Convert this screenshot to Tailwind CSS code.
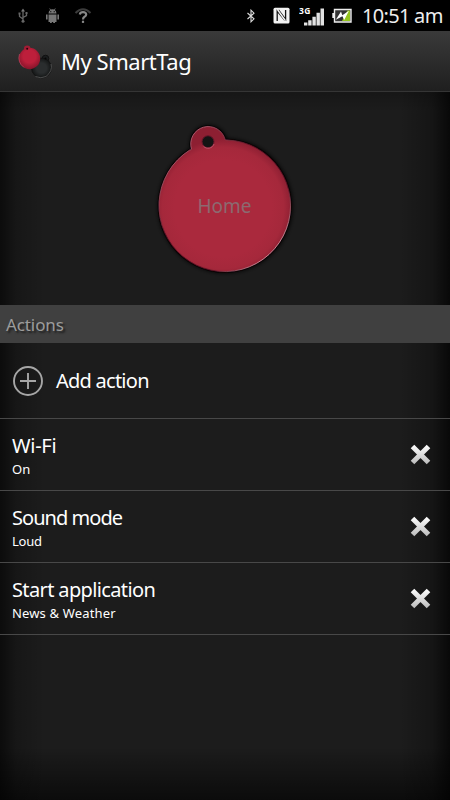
<!DOCTYPE html>
<html lang="en">
<head>
  <meta charset="UTF-8" />
  <title>My SmartTag</title>
  <meta name="viewport" content="width=device-width, initial-scale=1.0" />
  <script src="https://cdn.jsdelivr.net/npm/@tailwindcss/browser@4"></script>
</head>

<body class="flex flex-col w-[450px] h-[800px] overflow-hidden bg-black font-['Noto_Sans',sans-serif] text-white">

  <!-- Status bar -->
  <div class="flex items-center h-[31px] shrink-0 bg-black">
    <svg class="ml-[17px] w-[12px] h-[16px]" viewBox="0 0 12 16" fill="none" stroke="#666" stroke-width="1.3">
      <path d="M6 2v11M6 11L2.5 8.500V6M6 9.500l3.500-2V5" />
      <path d="M6 .5L8 3.500H4z" fill="#777" stroke="none" />
      <circle cx="6" cy="13.300" r="1.500" fill="#666" stroke="none" />
      <path d="M1.500 4.500h2v2h-2zM8.500 4h2v2h-2z" fill="#666" stroke="none" />
    </svg>
    <svg class="ml-[17px] w-[13px] h-[16px]" viewBox="0 0 13 16" fill="#777">
      <path d="M2.500 5.500Q2.700 2.800 4.200 2L3.300.6l.5-.4 1 1.400Q6.500 1 8.200 1.600l1-1.400.5.4L8.800 2Q10.300 2.800 10.500 5.500z" />
      <path d="M2.500 6.500h8V14h-8zM0 6.500h1.600v5H0zM11.400 6.500H13v5h-1.600z" />
      <path d="M4 13h1.800v2H4zM7.200 13H9v2H7.200z" />
      <circle cx="4.800" cy="3.700" r=".6" fill="#000" /><circle cx="8.200" cy="3.700" r=".6" fill="#000" />
    </svg>
    <svg class="ml-[15px] w-[18px] h-[16px]" viewBox="0 0 18 16" fill="none">
      <path d="M1.500 5Q9-2.500 16.500 5" stroke="#3c3c3c" stroke-width="2" />
      <path d="M5.800 6.500Q6.200 4.200 9 4.200q3.200 0 3.200 2.300 0 1.400-1.700 2.300Q9 9.600 9 11.500" stroke="#888" stroke-width="2.200" />
      <path d="M7.900 12.700h2.200v2.200H7.900z" fill="#888" />
    </svg>

    <svg class="ml-auto w-[10px] h-[14px]" viewBox="0 0 10 14" fill="none" stroke="#ddd" stroke-width="1.100">
      <path d="M1.500 4L8 9.800 5 12.800V1.200L8 4.200 1.500 10" />
    </svg>
    <svg class="ml-[17px] w-[17px] h-[17px]" viewBox="0 0 17 17">
      <rect x=".5" y=".7" width="16" height="15.800" rx="1.500" fill="#f2f2f2" />
      <path d="M4.200 14V4l7.800 9.500" fill="none" stroke="#111" stroke-width="1.300" />
      <path d="M5.500 3L12.600 12.300V3" fill="none" stroke="#111" stroke-width="1.300" />
      <path d="M4.800 3L12.200 13.500" stroke="#f2f2f2" stroke-width="1.400" />
    </svg>
    <svg class="ml-[9px] w-[26px] h-[22px]" viewBox="0 0 26 22">
      <text x="0" y="8.500" font-family="Noto Sans, sans-serif" font-size="8.500" font-weight="700" letter-spacing=".3" fill="#fff">3G</text>
      <path d="M5 17.500h3.400V20.500H5zM9.200 15.200h3.400v5.300H9.200zM13.400 11.700h3.400v8.800h-3.400zM17.500 7.700h3.400v12.800h-3.400zM21.500 3.500H25v17h-3.500z" fill="#e2e2e2" />
    </svg>
    <svg class="ml-[7px] w-[20px] h-[15px]" viewBox="0 0 20 15">
      <path d="M2.500 1.500h16.500v12.500H2.500z" fill="#333" stroke="#eee" stroke-width="1.400" />
      <path d="M.3 5h2v5h-2z" fill="#eee" />
      <path d="M15.500 2.500h2.500v10.500H10z" fill="#94c41d" />
      <path d="M3.800 11.700L9 3.500l1.300 3.800L17 2.700 12.200 12l-1.800-3.800z" fill="#fff" />
    </svg>
    <div class="w-[81px] ml-[10px] mr-[7px] text-[20px] leading-[31px] whitespace-nowrap tracking-[-0.7px] text-[#eee]">10:51 am</div>
  </div>

  <!-- Title bar -->
  <header class="flex items-center h-[61px] shrink-0 bg-linear-to-b from-[#3a3a3a] to-[#1f1f1f] border-b border-[#353535]">
    <svg class="ml-[17px] w-[38px] h-[38px]" viewBox="0 0 38 38">
      <defs>
        <radialGradient id="mini" cx=".5" cy=".4" r=".6">
          <stop offset=".5" stop-color="#bd1f3b" />
          <stop offset="1" stop-color="#85142a" />
        </radialGradient>
        <radialGradient id="dark" cx=".5" cy=".5" r=".5">
          <stop offset=".5" stop-color="#2a2d2e" />
          <stop offset="1" stop-color="#131515" />
        </radialGradient>
      </defs>
      <circle cx="28.500" cy="16.500" r="3.300" fill="#1b1d1e" stroke="#111" />
      <circle cx="24.500" cy="26" r="10" fill="url(#dark)" stroke="#101010" stroke-width=".8" />
      <circle cx="28.500" cy="16.500" r="1" fill="#050505" />
      <path d="M34 22Q36 29 29 34.500Q24 37 18.500 34.500" fill="none" stroke="#666" stroke-width=".7" />
      <circle cx="10.200" cy="6.800" r="3.300" fill="#a01c34" />
      <circle cx="12.500" cy="16.500" r="10.700" fill="url(#mini)" />
      <circle cx="10.200" cy="6.700" r="1" fill="#250309" />
      <path d="M2.500 12Q0 20 7 25.500" fill="none" stroke="#c6506a" stroke-width=".6" />
    </svg>
    <h1 class="ml-[6px] text-[22px] leading-[30px] tracking-[-0.45px] whitespace-nowrap">My SmartTag</h1>
  </header>

  <main class="flex-1 flex flex-col bg-[#1c1c1c] bg-[linear-gradient(to_right,rgba(0,0,0,.6),rgba(0,0,0,.2)_16px,transparent_45px,transparent_400px,rgba(0,0,0,.25)_432px,rgba(0,0,0,.7)),linear-gradient(to_bottom,rgba(0,0,0,.2),transparent_20px,transparent_655px,rgba(0,0,0,.6))]">

    <!-- Tag -->
    <div class="flex justify-center h-[213px] pt-[24px]">
      <svg class="w-[150px] h-[165px]" viewBox="150 116 150 165">
        <defs>
          <radialGradient id="face" gradientUnits="userSpaceOnUse" cx="223" cy="208" r="69">
            <stop offset=".7" stop-color="#aa293d" />
            <stop offset=".88" stop-color="#a5283b" />
            <stop offset="1" stop-color="#8d1f32" />
          </radialGradient>
          <linearGradient id="rim" x1="0" y1="0" x2="1" y2="1">
            <stop offset=".1" stop-color="#d58392" />
            <stop offset=".4" stop-color="#5c1322" />
            <stop offset=".7" stop-color="#5c1322" />
            <stop offset=".85" stop-color="#dba1aa" />
          </linearGradient>
          <filter id="shade" x="-10%" y="-10%" width="120%" height="120%">
            <feDropShadow dx="0.500" dy="0" stdDeviation="2" flood-color="#000" flood-opacity="1" />
          </filter>
        </defs>
        <g filter="url(#shade)">
          <path fill="url(#face)" stroke="#0c0607" stroke-width="2.500"
            d="M191.500 149.200A17.500 17.500 0 1 1 225.200 139.800Q226 140 227 140A65.800 65.800 0 1 1 189.500 150.200Q191 149.800 191.500 149.200Z" />
        </g>
        <path fill="url(#face)" stroke="url(#rim)" stroke-width=".8"
          d="M191.500 149.200A17.500 17.500 0 1 1 225.200 139.800Q226 140 227 140A65.800 65.800 0 1 1 189.500 150.200Q191 149.800 191.500 149.200Z" />
        <circle cx="208" cy="141.700" r="6" fill="#141414" stroke="#68162a" stroke-width="1" />
        <path d="M203.500 146.300A6.300 6.300 0 0 0 214 144" fill="none" stroke="#c8667a" stroke-width=".8" />
        <text x="197.500" y="213" textLength="54" lengthAdjust="spacingAndGlyphs" font-family="Noto Sans, sans-serif" font-size="20" fill="#8c6a70">Home</text>
      </svg>
    </div>

    <!-- Section heading -->
    <div class="h-[38px] pl-[6px] bg-[#404040] text-[17px] leading-[39px] tracking-[-0.1px] text-[#9c9c9c] text-shadow-[2px_2px_2px_#1c1c1c]">Actions</div>

    <!-- Action list -->
    <div class="flex items-center h-[76px] pl-[12px] border-b border-[#484848]">
      <svg class="w-[32px] h-[32px]" viewBox="0 0 32 32" fill="none" stroke="#a6a6a6" stroke-width="1.900">
        <circle cx="16" cy="16" r="14" />
        <path d="M16 8v16M8 16h16" />
      </svg>
      <span class="ml-[12px] text-[20px] leading-[28px] tracking-[-0.75px]">Add action</span>
    </div>

    <div class="flex items-center justify-between h-[72px] pl-[12px] pr-[18px] border-b border-[#484848]">
      <div class="pt-[2px]">
        <p class="text-[20px] leading-[26px] tracking-[-0.3px]">Wi-Fi</p>
        <p class="text-[13px] leading-[20px]">On</p>
      </div>
      <svg class="w-[24px] h-[24px]" viewBox="0 0 24 24">
        <defs>
          <linearGradient id="cross" gradientUnits="userSpaceOnUse" x1="0" y1="2" x2="0" y2="22">
            <stop offset="0" stop-color="#fff" />
            <stop offset="1" stop-color="#b8b8b8" />
          </linearGradient>
        </defs>
        <path d="M4.500 3.500L20.500 19.500M20.500 3.500L4.500 19.500" stroke="url(#cross)" stroke-width="5" />
      </svg>
    </div>

    <div class="flex items-center justify-between h-[72px] pl-[12px] pr-[18px] border-b border-[#484848]">
      <div class="pt-[2px]">
        <p class="text-[20px] leading-[26px] tracking-[-0.95px]">Sound mode</p>
        <p class="text-[13px] leading-[20px] tracking-[-0.2px]">Loud</p>
      </div>
      <svg class="w-[24px] h-[24px]" viewBox="0 0 24 24">
        <path d="M4.500 3.500L20.500 19.500M20.500 3.500L4.500 19.500" stroke="url(#cross)" stroke-width="5" />
      </svg>
    </div>

    <div class="flex items-center justify-between h-[72px] pl-[12px] pr-[18px] border-b border-[#484848]">
      <div class="pt-[2px]">
        <p class="text-[20px] leading-[26px] tracking-[-0.63px]">Start application</p>
        <p class="text-[13px] leading-[20px] tracking-[0.15px]">News &amp; Weather</p>
      </div>
      <svg class="w-[24px] h-[24px]" viewBox="0 0 24 24">
        <path d="M4.500 3.500L20.500 19.500M20.500 3.500L4.500 19.500" stroke="url(#cross)" stroke-width="5" />
      </svg>
    </div>
  </main>
</body>
</html>
